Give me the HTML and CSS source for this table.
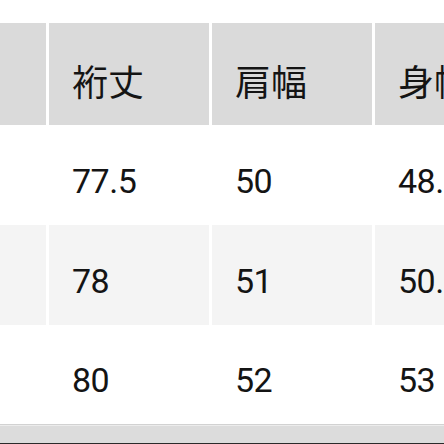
FILE: index.html
```html
<!DOCTYPE html>
<html lang="ja">
<head>
<meta charset="utf-8">
<link rel="stylesheet" href="styles.css">
</head>
<body>
<div class="page">
  <div class="table">
    <div class="cell head"></div>
    <div class="cell head">裄丈</div>
    <div class="cell head">肩幅</div>
    <div class="cell head">身幅</div>

    <div class="cell row"></div>
    <div class="cell row">77.5</div>
    <div class="cell row">50</div>
    <div class="cell row">48.5</div>

    <div class="cell row alt"></div>
    <div class="cell row alt">78</div>
    <div class="cell row alt">51</div>
    <div class="cell row alt">50.5</div>

    <div class="cell row"></div>
    <div class="cell row">80</div>
    <div class="cell row">52</div>
    <div class="cell row">53</div>
  </div>
  <div class="bar"></div>
</div>
</body>
</html>
```
FILE: styles.css
```css
html, body {
  margin: 0;
  padding: 0;
  background: #ffffff;
  overflow: hidden;
}
.page {
  width: 444px;
  height: 444px;
  overflow: hidden;
  padding-top: 23px;
  box-sizing: border-box;
  display: flex;
  flex-direction: column;
}
.table {
  display: grid;
  grid-template-columns: repeat(4, 160px);
  grid-template-rows: 102px 100px 100px 99px;
  column-gap: 3px;
  margin-left: -114px;
  width: 700px;
}
.cell {
  display: flex;
  align-items: center;
  padding-left: 23px;
  box-sizing: border-box;
  font-family: Roboto, "Noto Sans CJK JP", sans-serif;
  color: #141414;
  line-height: 1;
  white-space: nowrap;
}
.head {
  background: #dadada;
  font-size: 36px;
  padding-top: 12px;
  font-family: "Noto Sans CJK JP", sans-serif;
}
.row {
  background: #ffffff;
  font-size: 34px;
  letter-spacing: -0.5px;
  padding-top: 11px;
}
.alt {
  background: #f4f4f4;
}
.bar {
  height: 20px;
  box-sizing: border-box;
  background: #dcdcdc;
  border-top: 1px solid #d2d2d2;
  box-shadow: inset 0 1px 0 #ececec;
  border-bottom: 1px solid #2a2a2a;
}
```
